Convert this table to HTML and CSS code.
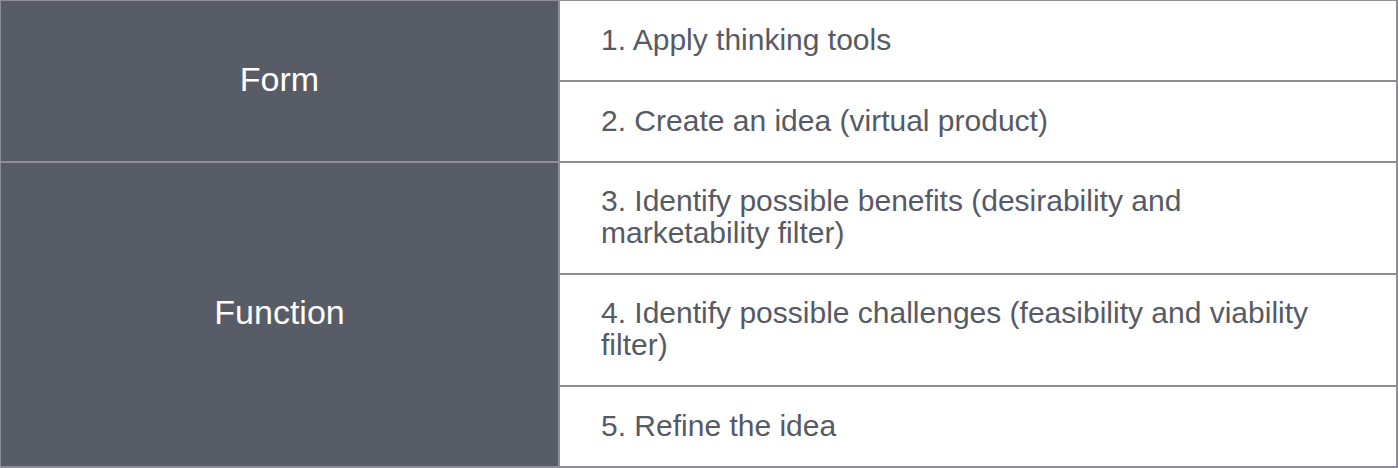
FILE: index.html
```html
<!DOCTYPE html>
<html lang="en">
<head>
<meta charset="utf-8">
<title>Form and Function</title>
<link rel="stylesheet" href="styles.css">
</head>
<body>
<div class="matrix">
  <div class="label label-form">Form</div>
  <div class="step">1. Apply thinking tools</div>
  <div class="step">2. Create an idea (virtual product)</div>
  <div class="label label-function">Function</div>
  <div class="step step-tall">3. Identify possible benefits (desirability and marketability filter)</div>
  <div class="step step-tall">4. Identify possible challenges (feasibility and viability filter)</div>
  <div class="step">5. Refine the idea</div>
</div>
</body>
</html>
```
FILE: styles.css
```css
html, body {
  margin: 0;
  padding: 0;
  background: #ffffff;
}

body {
  font-family: "Liberation Sans", Arial, Helvetica, sans-serif;
  font-size: 30px;
  line-height: 32px;
  overflow: hidden;
}

.matrix {
  display: grid;
  grid-template-columns: 557px 836px;
  grid-template-rows: 79px 79px 110px 110px 79px;
  gap: 2px;
  padding: 2px;
  margin: -1px 0 0 -1px;
  width: max-content;
  background: #8f8e98;
}

.label {
  grid-column: 1;
  display: flex;
  align-items: center;
  justify-content: center;
  padding-bottom: 5px;
  background: #585c67;
  color: #ffffff;
  font-size: 34px;
}

.label-form {
  grid-row: 1 / span 2;
}

.label-function {
  grid-row: 3 / span 3;
}

.step {
  grid-column: 2;
  display: flex;
  align-items: center;
  padding: 0 50px 2px 41px;
  background: #ffffff;
  color: #565a65;
}
```
